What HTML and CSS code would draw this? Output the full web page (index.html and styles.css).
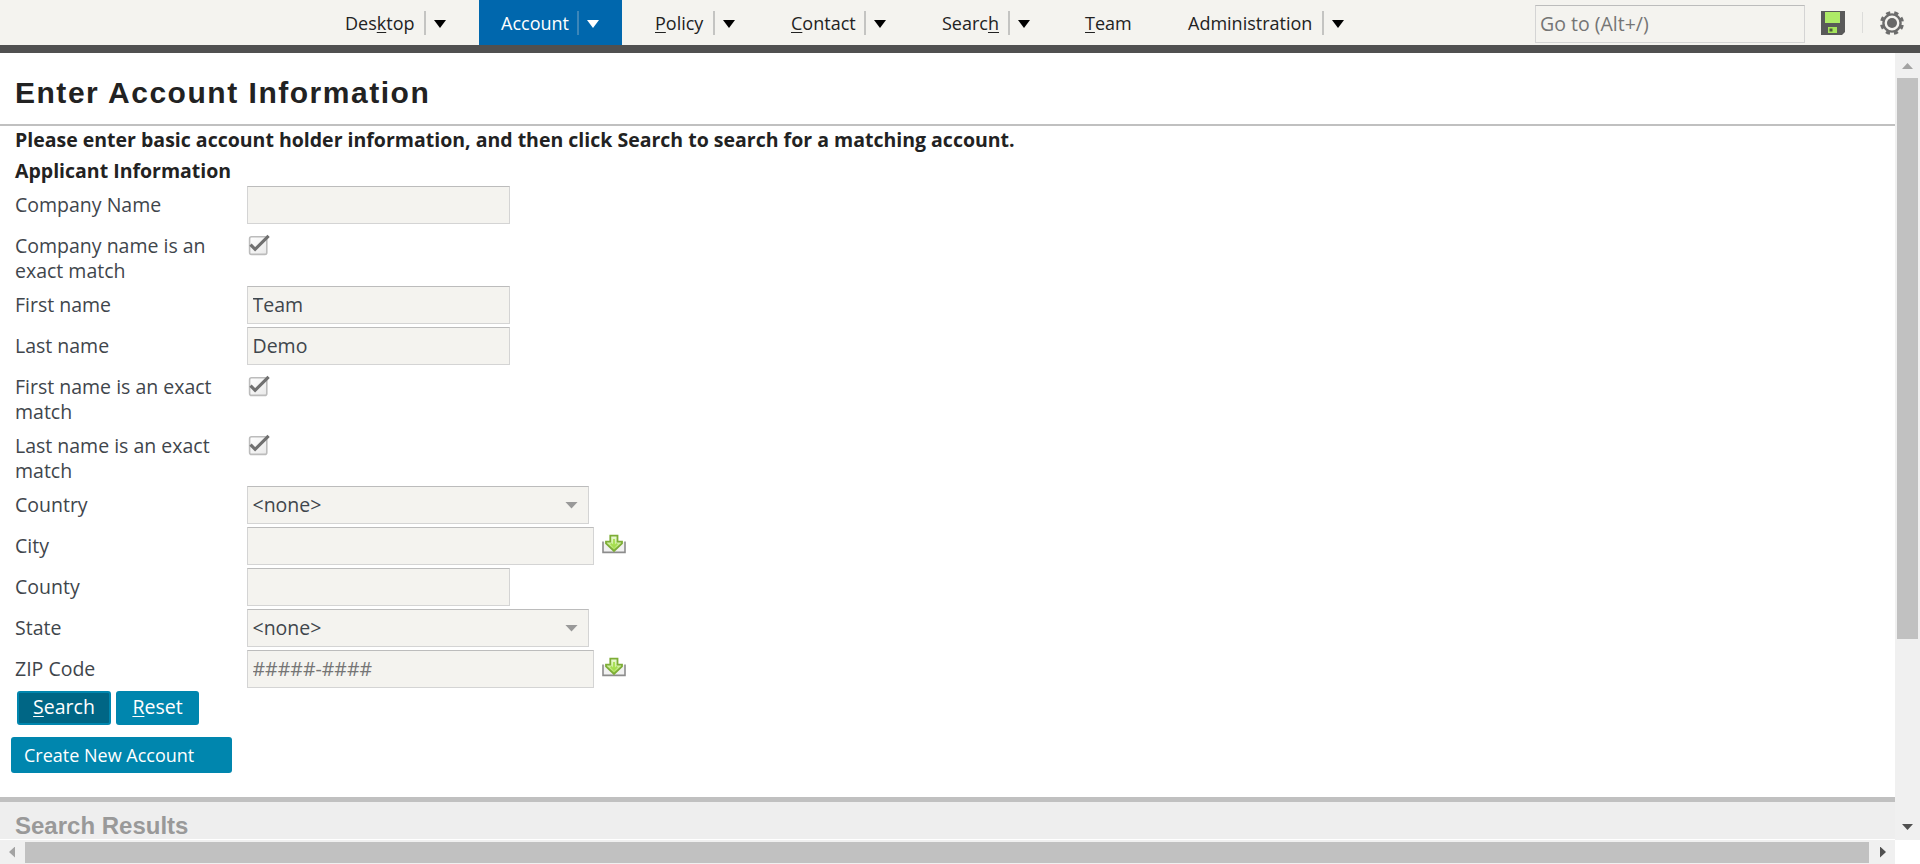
FILE: index.html
```html
<!DOCTYPE html>
<html lang="en">
<head>
<meta charset="utf-8">
<title>Enter Account Information</title>
<link rel="stylesheet" href="styles.css">
</head>
<body>
<svg class="defs" width="0" height="0">
  <defs>
    <linearGradient id="box" x1="0" y1="0" x2="1" y2="1"><stop offset="0" stop-color="#fff"/><stop offset="1" stop-color="#e9e9e9"/></linearGradient>
    <linearGradient id="leaf" x1="0" y1="0" x2="0" y2="1"><stop offset="0" stop-color="#eefadb"/><stop offset="0.45" stop-color="#d3f1a6"/><stop offset="1" stop-color="#a4de4c"/></linearGradient>
    <symbol id="check" viewBox="0 0 22 22">
      <rect x="1.6" y="2.8" width="17.2" height="17.6" rx="2" fill="url(#box)" stroke="#bcbcbc" stroke-width="1.6"/>
      <path d="M2.5 10.6 L7.1 15.3 L20.6 1.8" fill="none" stroke="#707070" stroke-width="3.2"/>
    </symbol>
    <symbol id="pick" viewBox="0 0 24 20">
      <rect x="1" y="8" width="22" height="10" fill="#f1f1f1"/>
      <path d="M1 7.6 V18.4 H23 V7.6" fill="none" stroke="#8c8c8c" stroke-width="1.6"/>
      <path d="M8.3 1.7 H15.5 V7.6 H20 V9.4 L12 17 L4 9.4 V7.6 H8.3 Z" fill="url(#leaf)" stroke="#7dad36" stroke-width="1.8"/>
      <path d="M12 5 V13 M8.8 9.6 L12 12.8 L15.2 9.6" fill="none" stroke="#a5de4e" stroke-width="1.8"/>
    </symbol>
  </defs>
</svg>
<header class="topbar">
  <nav class="tabs">
    <a class="tab tab-desktop"><span>Des<u>k</u>top</span><i class="drop"></i></a>
    <a class="tab tab-account active"><span>Account</span><i class="drop"></i></a>
    <a class="tab tab-policy"><span><u>P</u>olicy</span><i class="drop"></i></a>
    <a class="tab tab-contact"><span><u>C</u>ontact</span><i class="drop"></i></a>
    <a class="tab tab-search"><span>Searc<u>h</u></span><i class="drop"></i></a>
    <a class="tab tab-team"><span><u>T</u>eam</span></a>
    <a class="tab tab-admin"><span>Administration</span><i class="drop"></i></a>
  </nav>
  <div class="tools">
    <input class="goto" placeholder="Go to (Alt+/)">
    <svg class="save" width="24" height="24" viewBox="0 0 24 24"><path d="M0 0H24V21L21 24H0Z" fill="#595959"/><rect x="4" y="1" width="15" height="11" fill="#aeea67"/><rect x="7" y="16" width="9" height="6" fill="#a4e45a"/><rect x="8.5" y="17.5" width="3" height="3" fill="#4c5a3a"/></svg>
    <span class="rule"></span>
    <svg class="gear" width="24" height="24" viewBox="0 0 24 24"><circle cx="12" cy="12" r="8.6" fill="none" stroke="#6c6c6c" stroke-width="2.4"/><circle cx="12" cy="12" r="10.6" fill="none" stroke="#6c6c6c" stroke-width="2.8" stroke-dasharray="4.2 4.125" stroke-dashoffset="-2"/><circle cx="12" cy="12" r="5" fill="#686868"/></svg>
  </div>
</header>
<div class="shell">
  <main class="page">
    <h1>Enter Account Information</h1>
    <section class="entry">
      <p class="lead">Please enter basic account holder information, and then click Search to search for a matching account.</p>
      <h2>Applicant Information</h2>
      <div class="row"><label>Company Name</label><input class="field"></div>
      <div class="row tall"><label>Company name is an exact match</label><svg class="check"><use href="#check"/></svg></div>
      <div class="row"><label>First name</label><input class="field" value="Team"></div>
      <div class="row"><label>Last name</label><input class="field" value="Demo"></div>
      <div class="row tall"><label>First name is an exact match</label><svg class="check"><use href="#check"/></svg></div>
      <div class="row tall"><label>Last name is an exact match</label><svg class="check"><use href="#check"/></svg></div>
      <div class="row"><label>Country</label><div class="field select"><span>&lt;none&gt;</span><i></i></div></div>
      <div class="row"><label>City</label><input class="field wide"><svg class="pick"><use href="#pick"/></svg></div>
      <div class="row"><label>County</label><input class="field"></div>
      <div class="row"><label>State</label><div class="field select"><span>&lt;none&gt;</span><i></i></div></div>
      <div class="row"><label>ZIP Code</label><input class="field wide" placeholder="#####-####"><svg class="pick"><use href="#pick"/></svg></div>
      <div class="actions"><button class="btn primary"><u>S</u>earch</button><button class="btn reset"><u>R</u>eset</button></div>
      <button class="btn create">Create New Account</button>
    </section>
    <section class="results"><h3>Search Results</h3></section>
  </main>
  <div class="vbar"><i class="up"></i><b></b><i class="down"></i></div>
  <div class="hbar"><i class="left"></i><b></b><i class="right"></i></div>
</div>
</body>
</html>
```
FILE: styles.css
```css
* { box-sizing: border-box; }
body { margin: 0; height: 864px; overflow: hidden; background: #fff; font: 19.5px/25px "Open Sans", sans-serif; color: #3f464c; display: flex; flex-direction: column; }
.defs { position: absolute; }
u { text-decoration: underline; text-decoration-thickness: 1px; text-underline-offset: 2px; }

.topbar { flex: none; height: 53px; background: #f4f3ef; border-bottom: 8px solid #505050; display: flex; justify-content: space-between; }
.tabs { display: flex; margin-left: 323px; font-size: 18px; color: #222; }
.tab { height: 45px; padding: 11px 0 0 22px; display: flex; align-items: flex-start; white-space: nowrap; }
.tab-desktop { width: 156px; }
.tab-account { width: 143px; }
.tab-policy { width: 146px; padding-left: 33px; }
.tab-contact { width: 151px; padding-left: 23px; }
.tab-search { width: 144px; padding-left: 23px; }
.tab-team { width: 103px; }
.tab-admin { width: 211px; }
.tab span { flex: 1; }
.drop { flex: none; width: 55px; height: 24px; border-left: 2px solid #c4c4c2; padding: 9px 0 0 8px; }
.drop::before { content: ""; display: block; width: 12px; height: 8px; background: #000; clip-path: polygon(0 0, 100% 0, 50% 100%); }
.active { background: #0067ad; color: #fff; }
.active .drop { width: 45px; border-color: #3c86b9; }
.active .drop::before { background: #fff; }

.tools { display: flex; align-items: flex-start; padding-right: 16px; }
.goto { width: 270px; height: 38px; margin: 5px 16px 0 0; padding: 0 4px 2px; border: 1px solid #d4d4d4; border-top-color: #bcbcbc; background: #f4f3ef; font: 19.5px/25px "Open Sans", sans-serif; }
.goto::placeholder, .field::placeholder { color: #757575; opacity: 1; }
.save, .gear { margin-top: 11px; }
.rule { width: 1px; height: 21px; margin: 12px 17px 0; background: #dcdcda; }

.shell { flex: 1; display: grid; grid-template-columns: 1895px 25px; grid-template-rows: 786px 25px; }
.page { overflow: hidden; }
h1 { margin: 0; height: 73px; padding: 23px 15px 0; border-bottom: 2px solid #c0c0c0; font: bold 30px/34px "Liberation Sans", Arial, sans-serif; letter-spacing: 1.52px; color: #222; }
.lead { margin: 0; padding: 1px 15px 0; height: 29px; font-weight: 700; color: #222; white-space: nowrap; }
h2 { margin: 0; padding: 3px 15px 0; height: 31px; font: bold 19.5px/25px "Open Sans", sans-serif; color: #222; }
.row { height: 41px; padding-left: 15px; display: flex; align-items: flex-start; }
.tall { height: 59px; }
.row label { width: 232px; padding: 6px 20px 0 0; }
.field { width: 263px; height: 38px; padding: 0 4.5px 2px; border: 1px solid #d4d4d4; border-top: 1px solid #bcbcbc; background: #f4f3ef; font: 19.5px/25px "Open Sans", sans-serif; color: #3f464c; }
.wide { width: 347px; }
.select { width: 342px; display: flex; justify-content: space-between; align-items: center; padding: 0 10px 0 4.5px; }
.select span { padding-bottom: 2px; }
.select i { width: 13px; height: 7px; background: #999; clip-path: polygon(0 0, 100% 0, 50% 100%); }
.check { width: 22px; height: 22px; margin: 7px 0 0 1px; }
.pick { width: 24px; height: 20px; margin: 7px 0 0 8px; }

.btn { display: block; border: 0; border-radius: 3px; background: #0086ae; color: #fff; font: 500 19.5px/25px "Open Sans", sans-serif; padding: 0; text-align: center; }
.actions { display: flex; gap: 5px; padding-left: 17px; }
.actions .btn { height: 34px; padding-bottom: 4px; }
.primary { width: 94px; background: #006685; border: 2px solid #0086ae; }
.reset { width: 83px; }
.create { width: 221px; height: 36px; margin: 12px 0 24px 11px; padding-left: 13px; font-size: 18px; text-align: left; }
.results { height: 42px; border-top: 5px solid #c0c0c0; background: #eee; }
h3 { margin: 0; padding: 11px 15px 0; font: bold 24px/26px "Liberation Sans", Arial, sans-serif; color: #999; }

.vbar { height: 787px; padding: 10px 2px; background: #f0f0f0; display: flex; flex-direction: column; align-items: center; }
.vbar b { width: 21px; height: 561px; background: #c1c1c1; margin: 9px 0 auto; }
.vbar i { width: 11px; height: 6px; }
.up { background: #a3a3a3; clip-path: polygon(50% 0, 100% 100%, 0 100%); }
.down { background: #505050; clip-path: polygon(0 0, 100% 0, 50% 100%); }
.hbar { margin-top: 1px; padding: 0 9px; background: #f0f0f0; display: flex; align-items: center; }
.hbar b { width: 1844px; height: 21px; background: #c1c1c1; margin: 1px 11px 0 10px; flex: none; }
.hbar i { width: 6px; height: 11px; flex: none; }
.left { background: #a3a3a3; clip-path: polygon(0 50%, 100% 0, 100% 100%); }
.right { background: #505050; clip-path: polygon(0 0, 100% 50%, 0 100%); }
```
